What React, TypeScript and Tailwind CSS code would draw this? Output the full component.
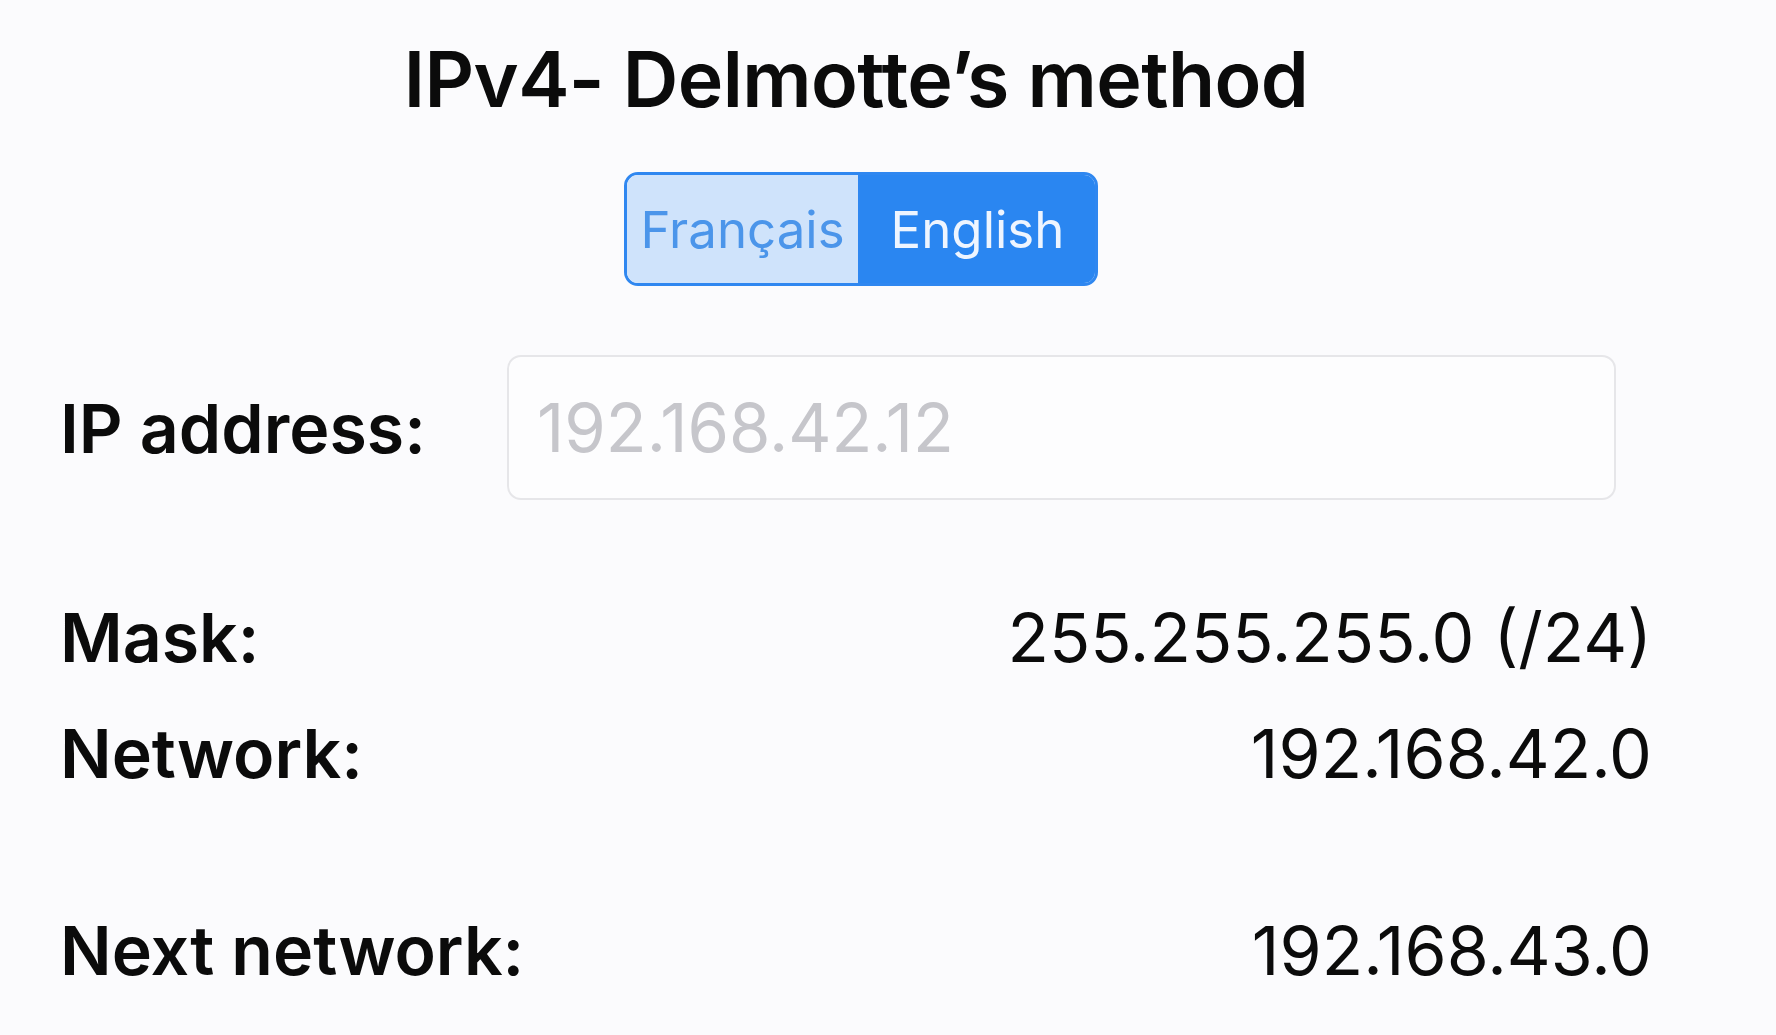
import React from "react";

export default function App() {
  const font = { fontFamily: "Inter, 'Noto Sans', 'Liberation Sans', sans-serif" };
  return (
    <div className="w-full h-[1035px] bg-[#fbfbfd] overflow-hidden text-[#0b0b0b]" style={font}>
      <div className="w-[1592px] ml-[60px] flex flex-col">
        <h1 className="pt-[41px] text-center text-[77px] leading-none font-semibold tracking-[-0.6px]">
          IPv4- Delmotte’s method
        </h1>
        <div className="mt-[54px] flex justify-center">
          <div className="ml-[10px] flex h-[114px] rounded-[14px] border-[3px] border-[#2f87f0] overflow-hidden">
            <button className="w-[233px] bg-[#cfe3fb] text-[#4b95ea] text-[51px] leading-none border-r-[2px] border-[#2f87f0]">
              Français
            </button>
            <button className="w-[235px] bg-[#2a86f1] text-[#eef5ff] text-[51px] leading-none">
              English
            </button>
          </div>
        </div>
        <div className="mt-[69px] flex items-center">
          <div className="w-[447px] text-[68px] leading-none font-semibold">IP address:</div>
          <div className="w-[1109px] h-[145px] rounded-[14px] border-[2px] border-[#e6e6e9] bg-[#fdfdfe] flex items-center pl-[28px]">
            <span className="text-[67px] leading-none text-[#c6c6cb]">192.168.42.12</span>
          </div>
        </div>
        <div className="mt-[103px] flex justify-between text-[68px] leading-none">
          <span className="font-semibold">Mask:</span>
          <span>255.255.255.0 (/24)</span>
        </div>
        <div className="mt-[48px] flex justify-between text-[68px] leading-none">
          <span className="font-semibold">Network:</span>
          <span>192.168.42.0</span>
        </div>
        <div className="mt-[129px] flex justify-between text-[68px] leading-none">
          <span className="font-semibold">Next network:</span>
          <span>192.168.43.0</span>
        </div>
      </div>
    </div>
  );
}
